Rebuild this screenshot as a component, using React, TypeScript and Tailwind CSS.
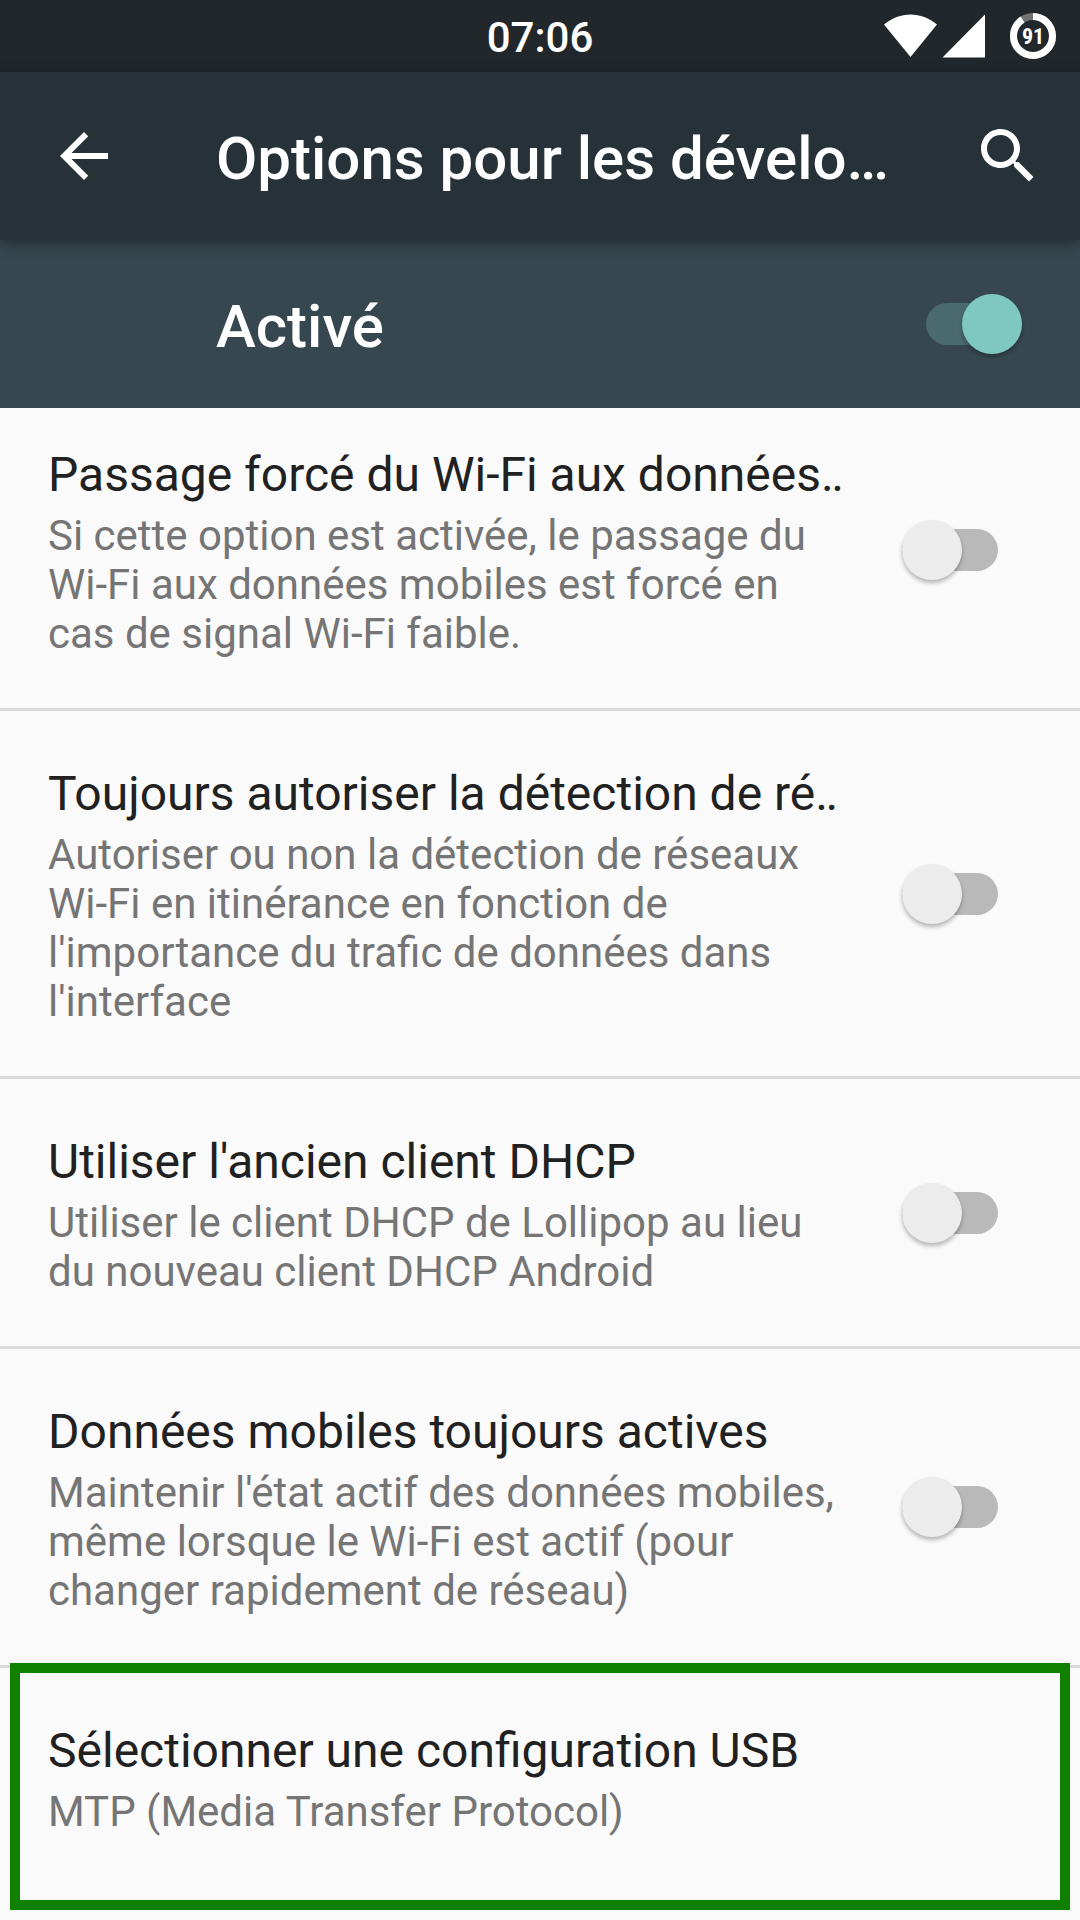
import { useState } from 'react'

type Option = {
  id: string
  title: string
  summary: string
}

const options: Option[] = [
  {
    id: 'wifi-handover',
    title: 'Passage forcé du Wi-Fi aux données‥',
    summary: 'Si cette option est activée, le passage du Wi-Fi aux données mobiles est forcé en cas de signal Wi-Fi faible.',
  },
  {
    id: 'wifi-roam-scan',
    title: 'Toujours autoriser la détection de ré‥',
    summary: "Autoriser ou non la détection de réseaux Wi-Fi en itinérance en fonction de l'importance du trafic de données dans l'interface",
  },
  {
    id: 'legacy-dhcp',
    title: "Utiliser l'ancien client DHCP",
    summary: 'Utiliser le client DHCP de Lollipop au lieu du nouveau client DHCP Android',
  },
  {
    id: 'mobile-data',
    title: 'Données mobiles toujours actives',
    summary: "Maintenir l'état actif des données mobiles, même lorsque le Wi-Fi est actif (pour changer rapidement de réseau)",
  },
]

type SwitchProps = {
  id: string
  checked: boolean
  onChange: (checked: boolean) => void
}

const Switch = ({ id, checked, onChange }: SwitchProps) => (
  <input
    id={id}
    type="checkbox"
    role="switch"
    checked={checked}
    onChange={e => onChange(e.target.checked)}
    className="relative h-15 w-24 shrink-0 cursor-pointer appearance-none before:absolute before:inset-x-0 before:inset-y-[9px] before:rounded-full before:bg-[#b9b9b9] after:absolute after:left-0 after:top-0 after:size-15 after:rounded-full after:bg-[#ececec] after:shadow-[0_3px_4px_rgba(0,0,0,0.28)] checked:before:bg-[#4b6a6d] checked:after:left-9 checked:after:bg-[#7fc8c1]"
  />
)

const StatusBar = () => (
  <div className="grid h-18 grid-cols-3 items-center bg-[#21272b] px-6 text-white">
    <time className="col-start-2 pt-0.5 text-center text-[42px] font-medium">07:06</time>
    <div className="flex items-center justify-end">
      <svg viewBox="0 0 54 44" className="h-11 w-[54px]" fill="currentColor" aria-hidden="true">
        <path d="M26.500 43 0 10.500C8 4 17 .5 26.500 .5S45 4 53 10.500z" />
      </svg>
      <svg viewBox="0 0 44 44" className="ml-1 size-11" fill="currentColor" aria-hidden="true">
        <path d="M.5 43.500 43 .5v43z" />
      </svg>
      <div className="relative ml-6 flex size-[46px] items-center justify-center">
        <svg viewBox="0 0 46 46" className="absolute inset-0 -rotate-90" fill="none" strokeWidth="7" aria-hidden="true">
          <circle cx="23" cy="23" r="19.500" stroke="#6f7375" />
          <circle cx="23" cy="23" r="19.500" stroke="#fff" pathLength="100" strokeDasharray="91 9" />
        </svg>
        <span className="relative font-['Roboto_Condensed',Roboto,sans-serif] text-[22px] font-bold">91</span>
      </div>
    </div>
  </div>
)

type OptionTextProps = {
  title: string
  summary: string
}

const OptionText = ({ title, summary }: OptionTextProps) => (
  <>
    <span className="mb-1 block text-5xl leading-[64px] text-[#212121]">{title}</span>
    <span className="block text-[42px] leading-[49px] text-[#757575]">{summary}</span>
  </>
)

const App = () => {
  const [ enabled, setEnabled ] = useState(true)
  const [ active, setActive ] = useState<Record<string, boolean>>({})

  return (
    <div className="min-h-screen bg-[#fafafa] font-[Roboto,sans-serif]">
      <StatusBar />

      <header className="relative z-10 flex h-42 items-center bg-[#263238] pl-12 pr-9 text-white shadow-[0_4px_12px_rgba(0,0,0,0.35)]">
        <button type="button" aria-label="Retour" className="shrink-0">
          <svg viewBox="0 0 24 24" className="size-18" fill="currentColor">
            <path d="M20 11H7.830l5.590-5.590L12 4l-8 8 8 8 1.410-1.410L7.830 13H20v-2z" />
          </svg>
        </button>
        <h1 className="ml-24 flex-1 truncate pt-1.5 text-6xl leading-[80px] font-medium">Options pour les dévelo…</h1>
        <button type="button" aria-label="Rechercher" className="shrink-0">
          <svg viewBox="0 0 24 24" className="size-18" fill="currentColor">
            <path d="M15.500 14h-.79l-.28-.27C15.410 12.590 16 11.110 16 9.500 16 5.910 13.090 3 9.500 3S3 5.910 3 9.500 5.910 16 9.500 16c1.610 0 3.090-.59 4.230-1.570l.27.28v.79l5 4.990L20.490 19l-4.990-5zm-6 0C7.010 14 5 11.990 5 9.500S7.010 5 9.500 5 14 7.010 14 9.500 11.990 14 9.500 14z" />
          </svg>
        </button>
      </header>

      <main>
        <div className="relative flex h-42 items-center justify-between bg-[#37474f] pl-[216px] pr-[58px] text-white">
          <label htmlFor="enabled" className="pt-1.5 text-6xl leading-[80px] font-medium">Activé</label>
          <Switch id="enabled" checked={enabled} onChange={setEnabled} />
        </div>

        {/* the list is slightly scrolled under the header */}
        <div className="overflow-hidden">
          <ul className="-mt-4">
            {options.map(({ id, title, summary }) => (
              <li key={id} className="flex items-center gap-14 border-b-3 border-[#dadada] pl-12 pr-[82px]">
                <label htmlFor={id} className="flex-1 pt-[51px] pb-[50px]">
                  <OptionText title={title} summary={summary} />
                </label>
                <Switch id={id} checked={!!active[id]} onChange={checked => setActive({ ...active, [id]: checked })} />
              </li>
            ))}
            <li className="relative pb-[34px]">
              <button type="button" className="block w-full px-12 pt-[51px] pb-[50px] text-left">
                <OptionText title="Sélectionner une configuration USB" summary="MTP (Media Transfer Protocol)" />
              </button>
              <div className="pointer-events-none absolute inset-x-2.5 -top-[5px] bottom-2.5 border-10 border-[#108000]" />
            </li>
          </ul>
        </div>
      </main>
    </div>
  )
}

export default App
